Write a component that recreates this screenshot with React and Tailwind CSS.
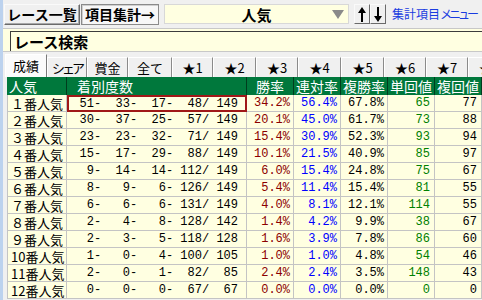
import React from "react";

const rows = [
  [1, 51, 33, 17, 48, 149, "34.2%", "56.4%", "67.8%", 65, 77],
  [2, 30, 37, 25, 57, 149, "20.1%", "45.0%", "61.7%", 73, 88],
  [3, 23, 23, 32, 71, 149, "15.4%", "30.9%", "52.3%", 93, 94],
  [4, 15, 17, 29, 88, 149, "10.1%", "21.5%", "40.9%", 85, 97],
  [5, 9, 14, 14, 112, 149, "6.0%", "15.4%", "24.8%", 75, 67],
  [6, 8, 9, 6, 126, 149, "5.4%", "11.4%", "15.4%", 81, 55],
  [7, 6, 6, 6, 131, 149, "4.0%", "8.1%", "12.1%", 114, 55],
  [8, 2, 4, 8, 128, 142, "1.4%", "4.2%", "9.9%", 38, 67],
  [9, 2, 3, 5, 118, 128, "1.6%", "3.9%", "7.8%", 86, 60],
  [10, 1, 0, 4, 100, 105, "1.0%", "1.0%", "4.8%", 54, 46],
  [11, 2, 0, 1, 82, 85, "2.4%", "2.4%", "3.5%", 148, 43],
  [12, 0, 0, 0, 67, 67, "0.0%", "0.0%", "0.0%", 0, 0],
];

const wide = ["", "１", "２", "３", "４", "５", "６", "７", "８", "９"];
const tabs = [
  ["シェア", "w-[40px]"],
  ["賞金", "w-[41px]"],
  ["全て", "w-[44px]"],
  ["★1", "w-[41px]"],
  ["★2", "w-[43px]"],
  ["★3", "w-[42px]"],
  ["★4", "w-[43px]"],
  ["★5", "w-[43px]"],
  ["★6", "w-[42px]"],
  ["★7", "w-[42px]"],
  ["★8", "w-[42px]"],
];

const pad = (v, w) => String(v).padStart(w, " ");
const cols = "grid grid-cols-[60px_180px_47px_47px_47px_47px_47px]";
const mono = "font-['Liberation_Mono',monospace] text-[12px]";
const cell = "flex items-center border-r border-b border-[#c4c4c4] bg-[#ffffe1]";

function Arrow({ down }) {
  return (
    <svg width="8" height="15" viewBox="0 0 8 15" className={down ? "rotate-180" : ""}>
      <path d="M4 0 L0 6 H3 V15 H5 V6 H8 Z" fill="#000" />
    </svg>
  );
}

export default function App() {
  return (
    <div className="flex h-[300px] w-[482px] overflow-hidden bg-[#f0f0f0] font-['Noto_Sans_CJK_JP',sans-serif] text-black">
      <div className="w-[3px] shrink-0 bg-[#bcd2ee]" />
      <div className="flex min-w-0 flex-1 flex-col overflow-hidden">
        {/* toolbar */}
        <div className="flex h-[28px] shrink-0 items-center">
          <div className="ml-[1px] flex h-[21px] w-[76px] shrink-0 items-center justify-center border border-[#fafafa] border-r-[#6a6a6a] border-b-[#6a6a6a] bg-[#f0f0f0] text-[14px] font-bold leading-none shadow-[inset_-1px_-1px_0_#a8a8a8]">
            レース一覧
          </div>
          <div className="ml-[1px] flex h-[21px] w-[78px] shrink-0 items-center justify-center border border-[#8a8a8a] bg-[#f7f7f7] text-[14px] font-bold leading-none shadow-[inset_1px_1px_0_#d0d0d0]">
            項目集計→
          </div>
          <div className="relative ml-[5px] flex h-[20px] w-[185px] shrink-0 items-center justify-center border border-[#d8d8d8] bg-[#ffffe1] text-[15px] font-bold leading-none">
            人気
            <svg width="12" height="9" viewBox="0 0 12 9" className="absolute right-[4px] top-[5px]">
              <polygon points="0,0 12,0 6,9" fill="#8a8a8a" />
            </svg>
          </div>
          <div className="ml-[5px] flex h-[20px] w-[16px] shrink-0 items-center justify-center border border-[#fafafa] border-r-[#6a6a6a] border-b-[#6a6a6a] bg-[#f0f0f0]">
            <Arrow />
          </div>
          <div className="flex h-[20px] w-[16px] shrink-0 items-center justify-center border border-[#fafafa] border-r-[#6a6a6a] border-b-[#6a6a6a] bg-[#f0f0f0]">
            <Arrow down />
          </div>
          <div className="ml-[6px] shrink-0 whitespace-nowrap text-[12px] leading-none text-[#1a3ce0]">
            集計項目<span className="tracking-[-3px]">メニュー</span>
          </div>
          <div className="ml-[7px] h-[22px] w-[12px] shrink-0 border border-[#a8a8a8] bg-[#fafafa]" />
        </div>

        {/* search row */}
        <div className="flex h-[24px] shrink-0 border-t border-b border-[#c8c8c8] bg-[#ffffe1] pl-[7px] pt-[2px]">
          <div className="flex flex-1 items-center border-l border-t border-[#3c3c3c] pl-[3px] text-[15px] font-bold leading-none">
            レース検索
          </div>
        </div>

        {/* tabs */}
        <div className="mt-[2px] flex h-[23px] shrink-0 items-end pl-[2px] text-[13px] leading-none">
          <div className="flex h-[23px] w-[42px] shrink-0 items-center justify-center border-l border-t border-[#ffffff] border-r border-r-[#7a7a7a] bg-[#fbfbfb] pb-[2px]">
            成績
          </div>
          {tabs.map(([t, w]) => (
            <div
              key={t}
              className={`${w} flex h-[20px] shrink-0 items-center justify-center border-l border-t border-[#ffffff] border-r border-r-[#8a8a8a] bg-[#f0f0f0]`}
            >
              {t === "シェア" ? <span className="tracking-[-3px]">{t}</span> : t}
            </div>
          ))}
        </div>

        {/* table */}
        <div className="ml-[4px] flex flex-col">
          <div className={`${cols} h-[18px] bg-[#00783c] text-[14px] leading-none text-white`}>
            <div className="flex items-center border-r border-[#003d1e] pl-[2px]">人気</div>
            <div className="flex items-center border-r border-[#003d1e] pl-[10px]">着別度数</div>
            <div className="flex items-center justify-center border-r border-[#003d1e]">勝率</div>
            <div className="flex items-center justify-center border-r border-[#003d1e]">連対率</div>
            <div className="flex items-center justify-center border-r border-[#003d1e]">複勝率</div>
            <div className="flex items-center justify-center border-r border-[#003d1e]">単回値</div>
            <div className="flex items-center justify-center border-r border-[#003d1e]">複回値</div>
          </div>
          {rows.map(([n, a, b, c, d, t, p1, p2, p3, r1, r2]) => (
            <div key={n} className={`${cols} h-[17px] leading-none`}>
              <div className={`${cell} border-l pl-[3px] text-[13px]`}>
                {n < 10 ? wide[n] : n}番人気
              </div>
              {n === 1 ? (
                <div className={`${mono} flex items-center justify-end whitespace-pre border-2 border-[#a01818] bg-[#ffffe1] pr-[7px]`}>
                  {pad(a, 4)}-{pad(b, 4)}-{pad(c, 4)}-{pad(d, 4)}/{pad(t, 4)}
                </div>
              ) : (
                <div className={`${cell} ${mono} justify-end whitespace-pre pr-[8px]`}>
                  {pad(a, 4)}-{pad(b, 4)}-{pad(c, 4)}-{pad(d, 4)}/{pad(t, 4)}
                </div>
              )}
              <div className={`${cell} ${mono} justify-end pr-[3px] text-[#8b0000]`}>{p1}</div>
              <div className={`${cell} ${mono} justify-end pr-[3px] text-[#0000ff]`}>{p2}</div>
              <div className={`${cell} ${mono} justify-end pr-[3px]`}>{p3}</div>
              <div className={`${cell} ${mono} justify-end pr-[4px] text-[#008000]`}>{r1}</div>
              <div className={`${cell} ${mono} justify-end pr-[4px]`}>{r2}</div>
            </div>
          ))}
        </div>
      </div>
    </div>
  );
}
